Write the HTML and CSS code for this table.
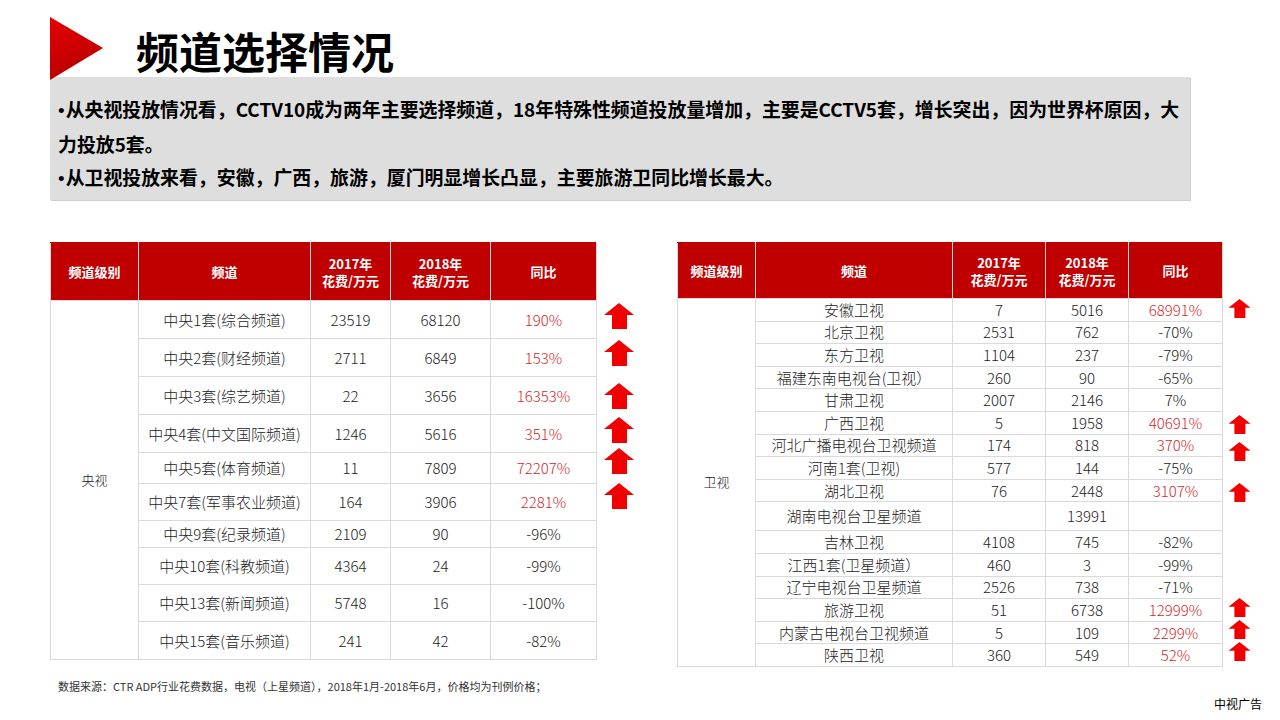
FILE: index.html
```html
<!DOCTYPE html>
<html lang="zh-CN">
<head>
<meta charset="utf-8">
<title>频道选择情况</title>
<link rel="stylesheet" href="styles.css">
</head>
<body>
<div class="slide">
  <header class="head">
    <svg class="tri" viewBox="0 0 53 63">
      <defs>
        <linearGradient id="tg" x1="0" y1="0" x2="0.3" y2="1">
          <stop offset="0" stop-color="#e60000"/>
          <stop offset="1" stop-color="#b80000"/>
        </linearGradient>
      </defs>
      <polygon points="0,0 53,31 0,63" fill="url(#tg)"/>
    </svg>
    <h1 class="title">频道选择情况</h1>
  </header>

  <section class="summary">
    <p><span class="dot">•</span>从央视投放情况看，CCTV10成为两年主要选择频道，18年特殊性频道投放量增加，主要是CCTV5套，增长突出，因为世界杯原因，大<br>力投放5套。</p>
    <p><span class="dot">•</span>从卫视投放来看，安徽，广西，旅游，厦门明显增长凸显，主要旅游卫同比增长最大。</p>
  </section>

  <div class="tables">
    <div class="wrap wrap-l">
      <table class="data data-l">
        <colgroup>
          <col class="c-l1"><col class="c-l2"><col class="c-l3"><col class="c-l4"><col class="c-l5">
        </colgroup>
        <thead>
          <tr class="hd-l"><th>频道级别</th><th>频道</th><th>2017年<br>花费/万元</th><th>2018年<br>花费/万元</th><th>同比</th></tr>
        </thead>
        <tbody>
          <tr class="r38"><td rowspan="10" class="grp">央视</td><td>中央1套(综合频道)</td><td>23519</td><td>68120</td><td class="up">190%</td></tr>
          <tr class="r38"><td>中央2套(财经频道)</td><td>2711</td><td>6849</td><td class="up">153%</td></tr>
          <tr class="r38"><td>中央3套(综艺频道)</td><td>22</td><td>3656</td><td class="up">16353%</td></tr>
          <tr class="r38"><td>中央4套(中文国际频道)</td><td>1246</td><td>5616</td><td class="up">351%</td></tr>
          <tr class="r31"><td>中央5套(体育频道)</td><td>11</td><td>7809</td><td class="up">72207%</td></tr>
          <tr class="r37"><td>中央7套(军事农业频道)</td><td>164</td><td>3906</td><td class="up">2281%</td></tr>
          <tr class="r27"><td>中央9套(纪录频道)</td><td>2109</td><td>90</td><td>-96%</td></tr>
          <tr class="r37"><td>中央10套(科教频道)</td><td>4364</td><td>24</td><td>-99%</td></tr>
          <tr class="r37"><td>中央13套(新闻频道)</td><td>5748</td><td>16</td><td>-100%</td></tr>
          <tr class="r38"><td>中央15套(音乐频道)</td><td>241</td><td>42</td><td>-82%</td></tr>
        </tbody>
      </table>
      <svg class="arr arr-l a-l1" viewBox="0 0 30 26"><polygon points="15,0 30,12 23,12 23,26 8,26 8,12 0,12"/></svg>
      <svg class="arr arr-l a-l2" viewBox="0 0 30 26"><polygon points="15,0 30,12 23,12 23,26 8,26 8,12 0,12"/></svg>
      <svg class="arr arr-l a-l3" viewBox="0 0 30 26"><polygon points="15,0 30,12 23,12 23,26 8,26 8,12 0,12"/></svg>
      <svg class="arr arr-l a-l4" viewBox="0 0 30 26"><polygon points="15,0 30,12 23,12 23,26 8,26 8,12 0,12"/></svg>
      <svg class="arr arr-l a-l5" viewBox="0 0 30 26"><polygon points="15,0 30,12 23,12 23,26 8,26 8,12 0,12"/></svg>
      <svg class="arr arr-l a-l6" viewBox="0 0 30 26"><polygon points="15,0 30,12 23,12 23,26 8,26 8,12 0,12"/></svg>
    </div>

    <div class="wrap wrap-r">
      <table class="data data-r">
        <colgroup>
          <col class="c-r1"><col class="c-r2"><col class="c-r3"><col class="c-r4"><col class="c-r5">
        </colgroup>
        <thead>
          <tr class="hd-r"><th>频道级别</th><th>频道</th><th>2017年<br>花费/万元</th><th>2018年<br>花费/万元</th><th>同比</th></tr>
        </thead>
        <tbody>
          <tr class="rr"><td rowspan="16" class="grp">卫视</td><td>安徽卫视</td><td>7</td><td>5016</td><td class="up">68991%</td></tr>
          <tr class="rr"><td>北京卫视</td><td>2531</td><td>762</td><td>-70%</td></tr>
          <tr class="rr"><td>东方卫视</td><td>1104</td><td>237</td><td>-79%</td></tr>
          <tr class="rr"><td>福建东南电视台(卫视）</td><td>260</td><td>90</td><td>-65%</td></tr>
          <tr class="rr"><td>甘肃卫视</td><td>2007</td><td>2146</td><td>7%</td></tr>
          <tr class="rr"><td>广西卫视</td><td>5</td><td>1958</td><td class="up">40691%</td></tr>
          <tr class="rr"><td>河北广播电视台卫视频道</td><td>174</td><td>818</td><td class="up">370%</td></tr>
          <tr class="rr"><td>河南1套(卫视)</td><td>577</td><td>144</td><td>-75%</td></tr>
          <tr class="rr"><td>湖北卫视</td><td>76</td><td>2448</td><td class="up">3107%</td></tr>
          <tr class="r29"><td>湖南电视台卫星频道</td><td></td><td>13991</td><td></td></tr>
          <tr class="rr"><td>吉林卫视</td><td>4108</td><td>745</td><td>-82%</td></tr>
          <tr class="rr"><td>江西1套(卫星频道）</td><td>460</td><td>3</td><td>-99%</td></tr>
          <tr class="rr"><td>辽宁电视台卫星频道</td><td>2526</td><td>738</td><td>-71%</td></tr>
          <tr class="rr"><td>旅游卫视</td><td>51</td><td>6738</td><td class="up">12999%</td></tr>
          <tr class="rr"><td>内蒙古电视台卫视频道</td><td>5</td><td>109</td><td class="up">2299%</td></tr>
          <tr class="rr"><td>陕西卫视</td><td>360</td><td>549</td><td class="up">52%</td></tr>
        </tbody>
      </table>
      <svg class="arr arr-r a-r1" viewBox="0 0 30 26"><polygon points="15,0 30,12 23,12 23,26 8,26 8,12 0,12"/></svg>
      <svg class="arr arr-r a-r2" viewBox="0 0 30 26"><polygon points="15,0 30,12 23,12 23,26 8,26 8,12 0,12"/></svg>
      <svg class="arr arr-r a-r3" viewBox="0 0 30 26"><polygon points="15,0 30,12 23,12 23,26 8,26 8,12 0,12"/></svg>
      <svg class="arr arr-r a-r4" viewBox="0 0 30 26"><polygon points="15,0 30,12 23,12 23,26 8,26 8,12 0,12"/></svg>
      <svg class="arr arr-r a-r5" viewBox="0 0 30 26"><polygon points="15,0 30,12 23,12 23,26 8,26 8,12 0,12"/></svg>
      <svg class="arr arr-r a-r6" viewBox="0 0 30 26"><polygon points="15,0 30,12 23,12 23,26 8,26 8,12 0,12"/></svg>
      <svg class="arr arr-r a-r7" viewBox="0 0 30 26"><polygon points="15,0 30,12 23,12 23,26 8,26 8,12 0,12"/></svg>
    </div>
  </div>

  <footer class="source">数据来源：CTR ADP行业花费数据，电视（上星频道），2018年1月-2018年6月，价格均为刊例价格；</footer>
  <div class="brand">中视广告</div>
</div>
</body>
</html>
```

FILE: styles.css
```css
html, body {
  margin: 0;
  padding: 0;
  background: #fff;
}

.slide {
  width: 1280px;
  height: 720px;
  overflow: hidden;
  background: #fff;
  font-family: "Noto Sans CJK SC", "Noto Sans", sans-serif;
  color: #000;
}

/* ---------- header ---------- */
.head {
  display: flex;
  height: 77px;
  padding-left: 50px;
}

.tri {
  flex: none;
  width: 53px;
  height: 63px;
  margin-top: 17px;
  position: relative;
  z-index: 1;
}

.title {
  margin: 29px 0 0 33px;
  font-size: 43px;
  line-height: 43px;
  font-weight: 700;
  color: #000;
}

/* ---------- summary box ---------- */
.summary {
  margin-left: 50px;
  width: 1140px;
  height: 123px;
  box-sizing: border-box;
  padding: 15px 0 0 8px;
  background: #dedede;
  box-shadow: 1px 1px 0 #cfcfcf;
  font-size: 18.9px;
  line-height: 33px;
  font-weight: 700;
  color: #000;
  white-space: nowrap;
}

.summary p {
  margin: 0;
}

.dot {
  font-family: "Liberation Sans", sans-serif;
  font-weight: 400;
  margin-right: 1px;
}

/* ---------- tables ---------- */
.tables {
  display: flex;
  align-items: flex-start;
  margin-top: 42px;
  padding-left: 50px;
}

.wrap {
  position: relative;
  flex: none;
}

.wrap-l { width: 627px; }
.wrap-r { width: 545px; }

.data {
  border-collapse: collapse;
  table-layout: fixed;
  text-align: center;
  font-size: 15px;
  color: #222;
}

.data-l { width: 546px; }
.data-r { width: 545px; }

.c-l1 { width: 88px; }
.c-l2 { width: 172px; }
.c-l3 { width: 80px; }
.c-l4 { width: 100px; }
.c-l5 { width: 106px; }

.c-r1 { width: 78px; }
.c-r2 { width: 197px; }
.c-r3 { width: 93px; }
.c-r4 { width: 83px; }
.c-r5 { width: 94px; }

.data th {
  background: #c00000;
  color: #fff;
  font-size: 13px;
  line-height: 17px;
  font-weight: 700;
  padding: 0;
  border: 1px solid #d9d9d9;
  border-top-color: #c00000;
}

.hd-l { height: 58px; }
.hd-r { height: 56px; }

.data td {
  padding: 0;
  border: 1px solid #d9d9d9;
  line-height: 18px;
  font-weight: 300;
  white-space: nowrap;
}

.data td.grp {
  font-size: 13px;
  color: #222;
}

.data td.up {
  color: #d42a2a;
}

.r38 { height: 38px; }
.r37 { height: 37px; }
.r31 { height: 31px; }
.r27 { height: 27px; }
.r29 { height: 29px; }
.rr { height: 22.6px; }

/* ---------- arrows (annotations over the table area) ---------- */
.arr {
  position: absolute;
  fill: #f00000;
}

.arr-l {
  left: 554px;
  width: 30px;
  height: 26px;
}

.arr-r {
  left: 551px;
  width: 23px;
  height: 19px;
}

.a-l1 { top: 61px; }
.a-l2 { top: 98px; }
.a-l3 { top: 141px; }
.a-l4 { top: 175px; }
.a-l5 { top: 206px; }
.a-l6 { top: 241px; }

.a-r1 { top: 57px; }
.a-r2 { top: 173px; }
.a-r3 { top: 200px; }
.a-r4 { top: 241px; }
.a-r5 { top: 356px; }
.a-r6 { top: 378px; }
.a-r7 { top: 400px; }

/* ---------- footer ---------- */
.source {
  margin: 11px 0 0 58px;
  font-size: 11px;
  line-height: 16px;
  color: #333;
}

.brand {
  margin: 2px 18px 0 0;
  text-align: right;
  font-size: 12px;
  line-height: 16px;
  color: #000;
}
```
